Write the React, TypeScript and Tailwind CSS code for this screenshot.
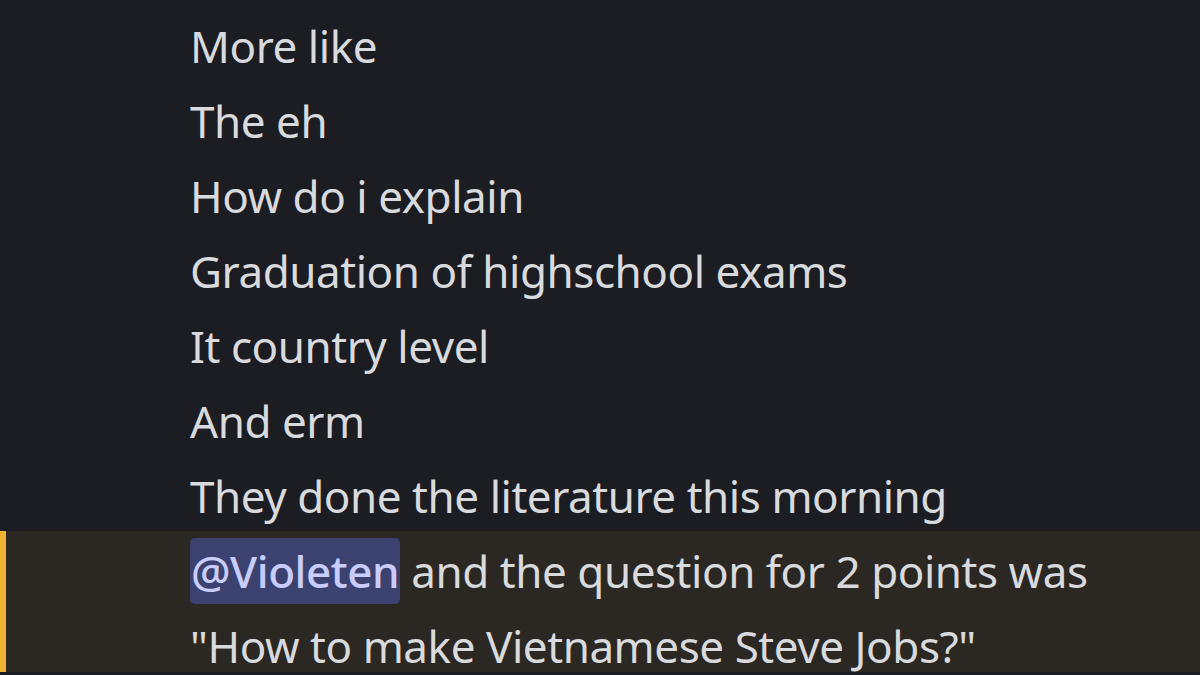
const lines = [
  'More like',
  'The eh',
  'How do i explain',
  'Graduation of highschool exams',
  'It country level',
  'And erm',
  'They done the literature this morning',
]

export default function App() {
  return (
    <div
      className="w-[1200px] h-[675px] overflow-hidden bg-[#1c1d22] text-[#d8dadd] text-[44px] leading-[75px] tracking-[-0.45px]"
      style={{ fontFamily: '"Noto Sans", "Open Sans", sans-serif' }}
    >
      <div className="pt-[9px] pl-[190px]">
        {lines.map((line) => (
          <div key={line}>{line}</div>
        ))}
      </div>
      {/* highlighted message that mentions the current user */}
      <div className="h-[141px] mt-[-3px] bg-[#2b2823] border-l-[6px] border-[#f0b232] pl-[184px] pt-[3px]">
        <div>
          <span className="rounded-[5px] bg-[#3c4270] text-[#c9cdfb] font-medium px-[1px] py-[3px]">@Violeten</span>{' '}
          and the question for 2 points was
        </div>
        <div>"How to make Vietnamese Steve Jobs?"</div>
      </div>
    </div>
  )
}
